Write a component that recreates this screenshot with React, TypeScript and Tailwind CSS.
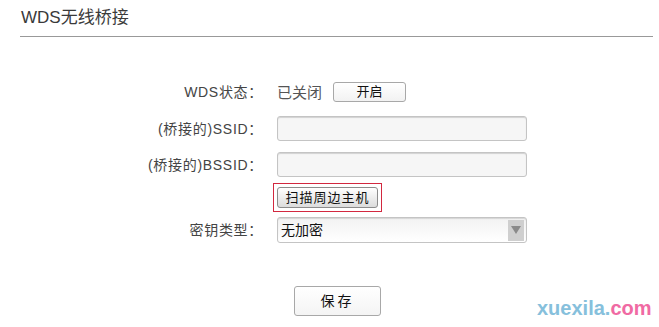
import React from "react";

const font = { fontFamily: '"Liberation Sans", Arial, "Noto Sans CJK SC", sans-serif' };

function Label({ children }: { children: React.ReactNode }) {
  return (
    <div className="w-[277px] shrink-0 pr-[14px] text-right text-[14px] leading-none tracking-[0.7px] text-[#444]">
      {children}
    </div>
  );
}

export default function App() {
  return (
    <div className="relative h-[327px] w-[659px] overflow-hidden bg-white" style={font}>
      <div className="ml-[20px] flex h-[37px] w-[633px] items-center border-b border-[#999] pl-[1px] text-[17px] text-[#3a3a3a]">
        WDS无线桥接
      </div>

      <div className="mt-[45px] flex h-[20px] items-center">
        <Label>WDS状态：</Label>
        <span className="text-[15px] leading-none text-[#555]">已关闭</span>
        <button className="ml-[11px] flex h-[20px] w-[73px] items-center justify-center rounded-[3px] border border-[#a8a8a8] bg-gradient-to-b from-white to-[#f2f2f2] text-[13px] text-[#111]">
          开启
        </button>
      </div>

      <div className="mt-[14px] flex h-[25px] items-center">
        <Label>(桥接的)SSID：</Label>
        <div className="h-[25px] w-[250px] rounded-[3px] border border-[#c4c4c4] bg-[#f6f6f6] shadow-[inset_0_1px_1px_rgba(0,0,0,0.15)]" />
      </div>

      <div className="mt-[11px] flex h-[25px] items-center">
        <Label>(桥接的)BSSID：</Label>
        <div className="h-[25px] w-[250px] rounded-[3px] border border-[#c4c4c4] bg-[#f6f6f6] shadow-[inset_0_1px_1px_rgba(0,0,0,0.15)]" />
      </div>

      <div className="mt-[6px] flex h-[29px] items-center">
        <div className="w-[273px] shrink-0" />
        <div className="flex h-[29px] w-[109px] items-center justify-center border border-[#d2283f]">
          <button className="flex h-[21px] w-[101px] items-center justify-center rounded-[3px] border border-[#8c8c8c] bg-gradient-to-b from-white to-[#dcdcdc] text-[13px] tracking-[1px] text-[#111]">
            扫描周边主机
          </button>
        </div>
      </div>

      <div className="mt-[5px] flex h-[26px] items-center">
        <Label>密钥类型：</Label>
        <div className="flex h-[26px] w-[250px] items-center justify-between rounded-[3px] border border-[#c4c4c4] bg-gradient-to-b from-[#f2f2f2] to-white pl-[3px] pr-[2px] shadow-[inset_0_1px_1px_rgba(0,0,0,0.12)]">
          <span className="text-[14px] leading-none text-[#111]">无加密</span>
          <div className="flex h-[21px] w-[16px] items-center justify-center bg-[#cfcfcf]">
            <svg width="10" height="8" viewBox="0 0 10 8">
              <polygon points="0,0 10,0 5,8" fill="#8a8a8a" />
            </svg>
          </div>
        </div>
      </div>

      <div className="mt-[43px] flex">
        <div className="w-[294px] shrink-0" />
        <button className="flex h-[30px] w-[87px] items-center justify-center rounded-[3px] border border-[#a8a8a8] bg-gradient-to-b from-white to-[#f4f4f4] text-[14px] tracking-[3px] text-[#111]">
          保存
        </button>
      </div>

      <div className="absolute left-[537px] top-[298px] text-[20px] font-bold leading-none">
        <span className="text-[#86c0dc]">xuexila.</span>
        <span className="text-[#f06aa3]">com</span>
      </div>
    </div>
  );
}
